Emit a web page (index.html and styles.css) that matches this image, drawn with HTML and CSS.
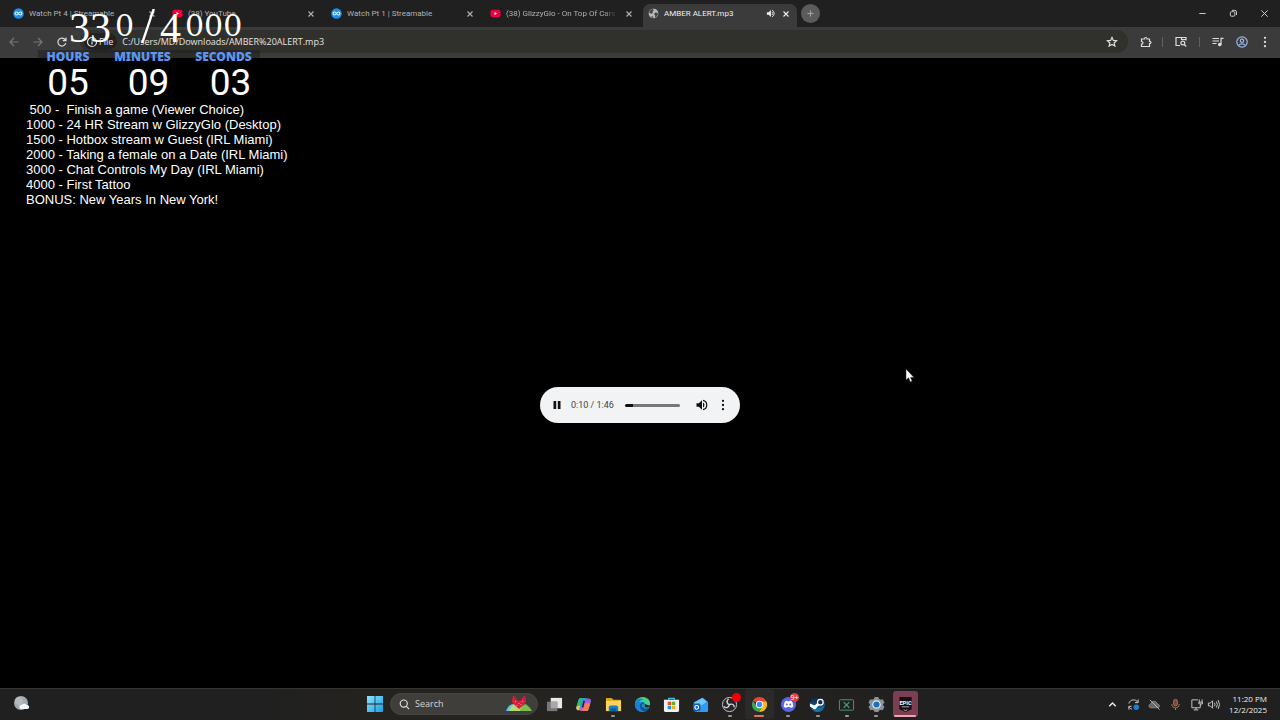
FILE: index.html
```html
<!DOCTYPE html>
<html lang="en">
<head>
<meta charset="utf-8">
<title>AMBER ALERT.mp3</title>
<link rel="stylesheet" href="styles.css">
</head>
<body>
<svg class="defs" aria-hidden="true">
  <symbol id="close" viewBox="0 0 8 8"><path d="M1.5 1.5l5 5M6.500 1.500l-5 5" stroke="currentColor" stroke-width="1.100" fill="none"/></symbol>
  <symbol id="streamable" viewBox="0 0 12 12"><circle cx="6" cy="6" r="5.700" fill="#1f8fe8"/><path d="M6 6C5.200 4.700 4.600 4.300 3.900 4.300a1.700 1.700 0 0 0 0 3.400C5.600 7.700 6.200 4.300 8 4.300a1.700 1.700 0 0 1 0 3.400C7.300 7.700 6.700 7.200 6 6z" fill="none" stroke="#e9f5ff" stroke-width="1.100"/></symbol>
  <symbol id="youtube" viewBox="0 0 12 12"><rect x=".5" y="2" width="11" height="8" rx="2" fill="#f0003c"/><path d="M4.900 4.300v3.400L7.900 6z" fill="#fff"/></symbol>
  <symbol id="dots" viewBox="0 0 12 12"><circle cx="6" cy="1.800" r="1.150"/><circle cx="6" cy="6" r="1.150"/><circle cx="6" cy="10.200" r="1.150"/></symbol>
</svg>

<header class="browser">
  <div class="tabstrip">
    <div class="tab"><svg class="fav"><use href="#streamable"/></svg><span class="title">Watch Pt 4 | Streamable</span><button class="close" aria-label="Close tab"><svg><use href="#close"/></svg></button></div>
    <div class="tab"><svg class="fav"><use href="#youtube"/></svg><span class="title">(38) YouTube</span><button class="close" aria-label="Close tab"><svg><use href="#close"/></svg></button></div>
    <div class="tab"><svg class="fav"><use href="#streamable"/></svg><span class="title">Watch Pt 1 | Streamable</span><button class="close" aria-label="Close tab"><svg><use href="#close"/></svg></button></div>
    <div class="tab"><svg class="fav"><use href="#youtube"/></svg><span class="title faded">(38) GlizzyGlo - On Top Of Cars</span><button class="close" aria-label="Close tab"><svg><use href="#close"/></svg></button></div>
    <div class="tab active"><svg class="fav" viewBox="0 0 12 12"><circle cx="6" cy="6" r="5.300" fill="#b9b9b9"/><path d="M5.200 1.200C2.600 1.700 1.500 3.500 1.300 5.300l2.500 1 1.600-.9L4.600 4l1.700-1zM10.800 5.500L8 5 6.500 6.500l1.300 1.300L7.500 10.500C9.500 10 10.900 8 10.800 5.500zM3 9.500l2.500-.5.300 1.800C4.500 10.800 3.600 10.200 3 9.500z" fill="#444"/></svg><span class="title">AMBER ALERT.mp3</span><button class="mute" aria-label="Mute tab"><svg viewBox="0 0 10 10"><path d="M1 3.500h2L5.500 1v8L3 6.500H1z" fill="currentColor"/><path d="M6.600 3.300a2.200 2.200 0 0 1 0 3.400M6.600 1.300a4 4 0 0 1 0 7.400" fill="none" stroke="currentColor"/></svg></button><button class="close" aria-label="Close tab"><svg><use href="#close"/></svg></button></div>
    <button class="newtab" aria-label="New tab"><svg viewBox="0 0 10 10"><path d="M5 1.500v7M1.500 5h7" stroke="currentColor" stroke-width="1"/></svg></button>
    <div class="windowbuttons">
      <button aria-label="Minimize"><svg viewBox="0 0 10 10"><path d="M1.500 5h7" stroke="currentColor"/></svg></button>
      <button aria-label="Restore"><svg viewBox="0 0 10 10" fill="none" stroke="currentColor"><rect x="1.500" y="3" width="5" height="5" rx="1.200"/><path d="M3.200 1.500h3.300Q8.300 1.500 8.300 3.300v3.400"/></svg></button>
      <button aria-label="Close"><svg viewBox="0 0 10 10"><path d="M1.500 1.500l7 7M8.500 1.500l-7 7" stroke="currentColor"/></svg></button>
    </div>
  </div>
  <div class="toolbar">
    <nav class="history">
      <button class="dim" aria-label="Back"><svg viewBox="0 0 12 12"><path d="M10.500 6h-8.500M6 2L2 6l4 4"/></svg></button>
      <button class="dim" aria-label="Forward"><svg viewBox="0 0 12 12"><path d="M1.500 6H10M6 2l4 4-4 4"/></svg></button>
      <button aria-label="Reload"><svg viewBox="0 0 12 12"><path d="M9.800 7.200A4 4 0 1 1 9.200 3.700L10 4.600M10 1.500v3.200H6.800"/></svg></button>
    </nav>
    <div class="omnibox">
      <button class="chip"><svg viewBox="0 0 12 12"><circle cx="6" cy="6" r="4.500"/><path d="M6 5.400v3M6 3.300v1.100"/></svg>File</button>
      <input class="url" type="text" aria-label="Address" value="C:/Users/MD/Downloads/AMBER%20ALERT.mp3">
      <button aria-label="Bookmark"><svg viewBox="0 0 12 12"><path d="M6 1.500l1.350 2.950 3.200.35-2.400 2.150.7 3.150L6 8.500l-2.850 1.600.7-3.150-2.400-2.150 3.200-.35z"/></svg></button>
    </div>
    <div class="actions">
      <button class="extensions" aria-label="Extensions"><svg viewBox="0 0 12 12"><path d="M1.500 3h3c0-2 2.500-2 2.500 0h2.500v2.300c2 0 2 2.400 0 2.400v2.800h-8V8c2 0 2-2.500 0-2.500z"/></svg></button>
      <i></i>
      <button aria-label="Search side panel"><svg viewBox="0 0 12 12"><path d="M5 9.500H1v-8h10v3M6.500 1.500v2H11"/><circle cx="7.800" cy="7" r="1.900"/><path d="M9.200 8.500l2 2"/></svg></button>
      <i></i>
      <button aria-label="Media controls"><svg viewBox="0 0 12 12"><path d="M.5 2.500h6.500M.5 5h6.500M.5 7.500h4M9 8.500V2.300h2.500"/><circle cx="7.800" cy="8.500" r="1.200" fill="currentColor"/></svg></button>
      <button class="profile" aria-label="Profile"><svg viewBox="0 0 12 12"><circle cx="6" cy="6" r="5.200"/><circle cx="6" cy="4.800" r="1.700"/><path d="M2.500 9.500c1.500-2.300 5.500-2.300 7 0"/></svg></button>
      <button class="menu" aria-label="Menu"><svg><use href="#dots"/></svg></button>
    </div>
  </div>
</header>

<main class="viewer">
  <div class="player">
    <button aria-label="Pause"><svg viewBox="0 0 12 12"><path d="M2.500 2h2.700v8H2.500zM6.800 2h2.700v8H6.800z"/></svg></button>
    <span class="time">0:10 / 1:46</span>
    <input class="seek" type="range" aria-label="Seek" min="0" max="106" value="10">
    <button class="volume" aria-label="Volume"><svg viewBox="0 0 12 12"><path d="M.5 4.200h2.300L6 1.200v9.600L2.800 7.800H.5z"/><path d="M7 3.600a2.700 2.700 0 0 1 0 4.800z"/><path d="M7 1.400a4.700 4.700 0 0 1 0 9.200" fill="none" stroke="#111" stroke-width="1.200"/></svg></button>
    <button class="more" aria-label="More options"><svg><use href="#dots"/></svg></button>
  </div>
</main>

<footer class="taskbar">
  <button class="weather" aria-label="Weather"><svg viewBox="0 0 18 18"><circle cx="8" cy="8" r="7" fill="#a5a9ac"/><circle cx="6" cy="6" r="4" fill="#b6babd"/><path d="M8 14a2 2 0 0 1 .5-4 3 3 0 0 1 5.300 0 2 2 0 0 1 .7 4z" fill="#f4f7fa"/></svg></button>
  <div class="dock">
    <button class="start" aria-label="Start"><svg viewBox="0 0 16 16"><defs><linearGradient id="win" x2="1" y2="1"><stop stop-color="#8de3fa"/><stop offset="1" stop-color="#15a2e9"/></linearGradient></defs><path d="M0 0h7.600v7.600H0zM8.400 0H16v7.600H8.400zM0 8.400h7.600V16H0zM8.400 8.400H16V16H8.400z" fill="url(#win)"/></svg></button>
    <label class="search"><svg class="glass" viewBox="0 0 12 12"><circle cx="5.200" cy="5" r="3.900"/><path d="M8 8l3 3"/></svg><input type="text" placeholder="Search" aria-label="Search"><svg class="art" viewBox="0 0 26 16"><path d="M0 15C2 10 5 7 9 9l3 6z" fill="#55c7ef"/><path d="M3 15C6 8 9 6 13 7l8 8z" fill="#b4d973"/><path d="M14 15c1-5 5-9 8-5 2 2 3 3 4 5z" fill="#7bbf4b"/><path d="M13 13L6.500 7C5 4 7 2 9.500 3L13 5l3.500-2c2.500-1 4.500 1 3 4z" fill="#d71f3c"/><path d="M7 0l3 3.500M9 1L6 3M19 0l-3 3.500M17 1l3 2" stroke="#d71f3c" stroke-width="1.300"/><path d="M9 5l1 1M12.500 7l1 1M16 5l1 1M10.500 9l1 1M14.500 9l1-1" stroke="#ff8591"/></svg></label>
    <div class="apps">
      <button aria-label="Task view"><svg viewBox="0 0 18 18"><path d="M5 2h12v11H5z" fill="#e8e8e8"/><path d="M1 6h11v10H1z" fill="#777"/><path d="M5 6h7v7H5z" fill="#a8a8a8"/></svg></button>
      <button aria-label="Copilot"><svg viewBox="0 0 18 18"><path d="M6 2h5c2 0 2 1.500 2.500 3h-3L8 13.500C7.500 15 6.500 15 5 15H3.500C1 15 1 12.500 2 9.500l1.500-5C4 3 4.500 2 6 2z" fill="#239edc"/><path d="M2 10l2-6c.5-1.500 1-2 2.500-2H8L5 12z" fill="#38b676"/><path d="M1.500 11l4-1-1 5H3.500c-2 0-2.300-2-2-4z" fill="#f2c845"/><path d="M12 16H7c-2 0-2-1.500-2.500-3h3L10 4.500C10.500 3 11.500 3 13 3h1.500C17 3 17 5.500 16 8.500l-1.500 5C14 15 13.500 16 12 16z" fill="#d75cc1"/><path d="M8 16l3-8h5.200l-1.700 5.500c-.5 1.500-1 2.500-2.500 2.500z" fill="#f47c55"/><path d="M11 3h3.500C17 3 17 5 16.500 7H10z" fill="#8e62e8"/><path d="M9.800 5L8 12" stroke="#262421" stroke-width="1.600"/></svg></button>
      <button class="running" aria-label="File Explorer"><svg viewBox="0 0 18 18"><path d="M1 2h6l2 2h7a1 1 0 0 1 1 1v3H1z" fill="#dca319"/><path d="M1 5h16v11H1z" fill="#fbd25c"/><path d="M4 16v-4.500L5.500 10h7l1.500 1.500V16z" fill="#1681ce"/><path d="M6 13h6v3H6z" fill="#075f9f"/></svg></button>
      <button aria-label="Edge"><svg viewBox="0 0 18 18"><circle cx="9" cy="9" r="8" fill="#178bd2"/><path d="M1 8C2-1 17-1 17 8c0 4-6 4-6 2 1-1 .5-4-3-4-3 0-6 1-7 2z" fill="#46cf91"/><path d="M1 8c1-5 6-6 9-4C6 4 5 7 5 10c0 4 4 6 7 6C6 19 0 14 1 8z" fill="#1a7fd6"/><path d="M11 8c-3 0-4 2-2 4 2 2 5 2 7 0-1 3-4 5-6 4-5-2-5-8-1-9 1 0 2 0 2 1z" fill="#15508f"/><path d="M11 10.500c1-1 .5-2 0-2.500 1.500.5 4 3 6.500 1.500-1 3-6.500 3-6.500 1z" fill="#242424"/></svg></button>
      <button aria-label="Microsoft Store"><svg viewBox="0 0 18 18"><path d="M6 4V2.500h6V4" fill="none" stroke="#40b9ed" stroke-width="1.400"/><path d="M1 4h16v11q0 2-2 2H3q-2 0-2-2z" fill="#eef2f5"/><path d="M5 6h3.600v3.600H5z" fill="#e5502b"/><path d="M9.400 6H13v3.600H9.400z" fill="#68ac27"/><path d="M5 10.400h3.600V14H5z" fill="#1b92dc"/><path d="M9.400 10.400H13V14H9.400z" fill="#eeb01c"/></svg></button>
      <button aria-label="Outlook"><svg viewBox="0 0 18 18"><path d="M2 7l8-5q1-.5 2 0l5 4v9q0 2-2 2H5q-3 0-3-3z" fill="#1972d3"/><path d="M2 7l9-5 5 4-8 6-6-1z" fill="#72c8fa"/><path d="M8 11l9-5v9q0 2-2 2H5z" fill="#2f9cf1"/><rect x="1" y="8" width="8" height="8" rx="1.500" fill="#155eb7"/><circle cx="5" cy="12" r="2" fill="none" stroke="#fff" stroke-width="1.200"/></svg></button>
      <button class="running" aria-label="OBS Studio"><svg viewBox="0 0 18 18"><circle cx="9" cy="9" r="7.500" fill="#28262a" stroke="#c9c9c9"/><path d="M8 3c-3 3-1 6 1 6 3-1 5 0 5 3M9 9c-1 4-4 4-6 2" fill="none" stroke="#d4d4d4" stroke-width="1.500"/></svg><span class="badge live"></span></button>
      <button class="running current" aria-label="Chrome"><svg viewBox="0 0 18 18"><path d="M9 9L2.100 5A8 8 0 0 1 16.200 5.500H9z" fill="#ea4335"/><path d="M9 9l0-3.500h7.200A8 8 0 0 1 8.500 17L12 11z" fill="#fbbc05"/><path d="M9 9l3 2-3.500 6A8 8 0 0 1 2.100 5L6 11z" fill="#34a853"/><circle cx="9" cy="9" r="3.900" fill="#fff"/><circle cx="9" cy="9" r="2.900" fill="#4285f4"/></svg></button>
      <button class="running" aria-label="Discord"><svg viewBox="0 0 18 18"><circle cx="9" cy="9" r="8" fill="#5965e8"/><path d="M5.500 5.500l2-.7.500.8h2l.5-.8 2 .7c1 1.500 1.700 4 1.500 6l-2.500 1.300-.7-1.200H7.200l-.7 1.200L4 11.500c-.2-2 .5-4.500 1.500-6z" fill="#fff"/><circle cx="7.200" cy="9" r="1" fill="#5965e8"/><circle cx="10.800" cy="9" r="1" fill="#5965e8"/></svg><span class="badge">9+</span></button>
      <button class="running" aria-label="Steam"><svg viewBox="0 0 18 18"><defs><linearGradient id="steam" x2="0" y2="1"><stop stop-color="#10203b"/><stop offset="1" stop-color="#157dbb"/></linearGradient></defs><circle cx="9" cy="9" r="8" fill="url(#steam)"/><path d="M1 8l5 2 3.500-3.500L12 9 8 12l-2 2-5-3z" fill="#fff"/><circle cx="12" cy="6.500" r="3" fill="#1b2d48" stroke="#fff" stroke-width="1.300"/><circle cx="6" cy="12" r="2" fill="#fff"/></svg></button>
      <button class="running" aria-label="Capture"><svg viewBox="0 0 18 18" fill="none" stroke="#439b83"><rect x="1.500" y="4" width="15" height="11" rx="1"/><path d="M6 6.500l6 6M12 6.500l-6 6" stroke-width="1.300"/></svg></button>
      <button class="running" aria-label="Settings"><svg viewBox="0 0 18 18"><path d="M7 1h4l.5 2 2 1 2-.5 2 3.500-1.500 1.500v1.500l1.500 1.500-2 3.500-2-.5-2 1L11 17H7l-.5-1.500-2-1-2 .5-2-3.500L2 10V8.500L.5 7l2-3.500 2 .5 2-1z" fill="#8c9299"/><circle cx="9" cy="9" r="4.500" fill="#e9edf0"/><circle cx="9" cy="9" r="3.300" fill="#1971bb"/></svg></button>
      <button class="running epic" aria-label="Epic Games"><svg viewBox="0 0 18 18"><path d="M2.500 1h13v13L9 17l-6.500-3z" fill="#111"/><text x="9" y="9" class="epictext">EPIC</text><path d="M5 11.500h8M7 14.500l2 1 2-1" stroke="#ddd" stroke-width=".8" fill="none"/></svg></button>
    </div>
  </div>
  <div class="tray">
    <button aria-label="Hidden icons"><svg viewBox="0 0 14 14"><path d="M3.500 9L7 5.500 10.500 9" stroke="#eee" stroke-width="1.500"/></svg></button>
    <button aria-label="Updates"><svg viewBox="0 0 14 14"><path d="M2 6c1-5 8-5 9.500-1.500M12 1.500v3.500H8.500M5.500 12C4 12 3 11 2.300 9.500M2 12.500V9h3"/><circle cx="10" cy="10" r="3" fill="#1d7fd2" stroke="none"/></svg></button>
    <button aria-label="Cloud sync off"><svg viewBox="0 0 14 14"><path d="M3 10.500c-2.500 0-2.500-4 0-4 1-4 6-4 7 0 3 0 3 4 .5 4z" fill="#686868" stroke="#888"/><path d="M2 2l10.500 10.500" stroke="#bbb"/></svg></button>
    <button class="mic" aria-label="Microphone"><svg viewBox="0 0 14 14"><rect x="5" y="1.500" width="4" height="7" rx="2" fill="#754735"/><path d="M3 6.500c0 5.500 8 5.500 8 0M7 10.800V13"/></svg></button>
    <button aria-label="Network"><svg viewBox="0 0 14 14"><path d="M8.500 2H2v8.500h9V8M4 12.800h5M6.500 10.500v2M10 1.500v3M13 1.500v3M9.500 4.500h4v1.800h-4zM11.500 6.500v2"/></svg></button>
    <button class="sound" aria-label="Sound"><svg viewBox="0 0 14 14"><path d="M1.500 5.500h2L6 3v8L3.500 8.500h-2zM8 5.200q1.300 1.800 0 3.600M10 3.700q2.400 3.300 0 6.600M12 2.200q3 4.800 0 9.600"/></svg></button>
    <div class="clock"><time>11:20 PM</time><time>12/2/2025</time></div>
  </div>
</footer>

<section class="overlay" aria-label="Stream goals">
  <div class="goal"><span class="low">33</span><span class="mid">0</span><span class="slash">/</span><span class="low">4</span><span class="mid">000</span></div>
  <div class="labels"><b>HOURS</b><b>MINUTES</b><b>SECONDS</b></div>
  <div class="digits"><span>05</span><span>09</span><span>03</span></div>
  <ul class="goals">
    <li> 500 -  Finish a game (Viewer Choice)</li>
    <li>1000 - 24 HR Stream w GlizzyGlo (Desktop)</li>
    <li>1500 - Hotbox stream w Guest (IRL Miami)</li>
    <li>2000 - Taking a female on a Date (IRL Miami)</li>
    <li>3000 - Chat Controls My Day (IRL Miami)</li>
    <li>4000 - First Tattoo</li>
    <li>BONUS: New Years In New York!</li>
  </ul>
</section>
<svg class="cursor" viewBox="0 0 10 15" aria-hidden="true"><path d="M1 1v11l2.600-2.300L5.200 14l2-.9-1.700-3.700H9z" fill="#fff" stroke="#222" stroke-width=".5"/></svg>
</body>
</html>
```

FILE: styles.css
```css
* { box-sizing: border-box; }
body {
  margin: 0;
  min-height: 100vh;
  display: flex;
  flex-direction: column;
  position: relative;
  background: #000;
  color: #ddd;
  font: 9px/12px "Open Sans", "Noto Sans", sans-serif;
}
button, input { font: inherit; color: inherit; background: none; border: 0; padding: 0; margin: 0; outline: 0; }
button { display: flex; align-items: center; justify-content: center; flex: none; }
svg { display: block; flex: none; }
.defs { position: absolute; width: 0; height: 0; }

/* Tab strip */
.tabstrip { display: flex; align-items: flex-end; height: 27px; padding-left: 4px; background: #202020; }
.tab {
  flex: 0 1 159px;
  min-width: 0;
  height: 23px;
  display: flex;
  align-items: center;
  padding: 0 7px 4px 9px;
  color: #b2b2b2;
}
.fav { width: 11px; height: 11px; margin-right: 5px; }
.title { flex: 1; min-width: 0; overflow: hidden; white-space: nowrap; font: 8px/12px Roboto, "Open Sans", sans-serif; }
.title.faded { margin-right: 8px; -webkit-mask-image: linear-gradient(90deg, #000 88%, transparent); mask-image: linear-gradient(90deg, #000 88%, transparent); }
.close svg { width: 8px; height: 8px; }
.tab.active {
  flex-basis: 154px;
  margin: 0 4px 0 3px;
  padding-left: 5px;
  background: #3b3b3b;
  border-radius: 7px 7px 0 0;
  color: #eee;
}
.mute { margin-right: 7px; }
.mute svg { width: 9px; height: 9px; }
.newtab { width: 19px; height: 19px; margin-bottom: 4px; border-radius: 50%; background: #5b5b5b; color: #aaa; }
.newtab svg { width: 9px; height: 9px; }
.windowbuttons { margin-left: auto; display: flex; height: 27px; }
.windowbuttons button { width: 31px; }
.windowbuttons svg { width: 9px; height: 9px; }

/* Toolbar */
.toolbar { display: flex; align-items: center; height: 31px; padding: 0 9px 2px 8px; background: #3b3b3b; }
.toolbar svg { width: 12px; height: 12px; fill: none; stroke: currentColor; stroke-width: 1.2; }
.history { display: flex; gap: 12px; margin-right: 12px; }
.history .dim { color: #777; }
.omnibox { flex: 1; display: flex; align-items: center; height: 23px; padding: 0 10px 0 4px; border-radius: 12px; background: #30302d; }
.chip { gap: 1px; height: 17px; padding: 0 4px 0 2px; border-radius: 9px; background: #222; color: #e5e5e5; }
.url { flex: 1; min-width: 0; margin-left: 5px; color: #e5e5e5; }
.actions { display: flex; align-items: center; gap: 12px; margin-left: 12px; }
.actions i { width: 1px; height: 10px; background: #606060; }
.actions .extensions { margin-right: -2px; }
.actions .profile { color: #9cb6e8; }
.actions .menu { margin-left: -1px; }
.actions .menu svg { fill: currentColor; stroke: none; }

/* Audio page */
.viewer { flex: 1; display: flex; align-items: center; justify-content: center; padding-top: 64px; }
.player { display: flex; align-items: center; width: 200px; height: 36px; padding: 0 11px; border-radius: 18px; background: #f1f3f4; color: #111; }
.player svg { width: 12px; height: 12px; fill: #111; }
.time { margin: 0 11px 0 8px; font: 9px/12px Roboto, sans-serif; color: #444; white-space: nowrap; }
.seek { -webkit-appearance: none; appearance: none; flex: 1; min-width: 0; height: 3px; border-radius: 2px; background: linear-gradient(90deg, #111 15%, #777 15%); }
.seek::-webkit-slider-thumb { -webkit-appearance: none; width: 1px; height: 1px; }
.volume { margin: 0 9px 0 16px; }

/* Taskbar */
.taskbar { display: grid; grid-template-columns: 1fr auto 1fr; align-items: center; height: 32px; padding-bottom: 1px; border-top: 1px solid #353535; background: linear-gradient(90deg, #202020 20%, #25231f 30%, #25231f 45%, #202020 75%); }
.weather { justify-self: start; margin-left: 13px; }
.weather svg { width: 18px; height: 18px; }
.dock { display: flex; align-items: center; }
.start { width: 30px; height: 30px; }
.start svg { width: 16px; height: 16px; }
.search { display: flex; align-items: center; width: 148px; height: 22px; padding: 0 5px 0 8px; border-radius: 11px; background: #403e3a; border: 1px solid #484642; }
.search input { flex: 1; min-width: 0; margin-left: 5px; font: 9px/16px "Open Sans", sans-serif; }
.search input::placeholder { color: #d5d3d0; opacity: 1; }
.glass { width: 11px; height: 11px; fill: none; stroke: #ddd; stroke-width: 1.3; }
.art { width: 26px; height: 16px; }
.apps { display: grid; grid-template-columns: repeat(13, 1fr); width: 380px; margin-left: 2px; }
.apps button { position: relative; height: 30px; }
.apps svg { width: 17px; height: 17px; }
.running::after { content: ""; position: absolute; bottom: 2px; left: calc(50% - 2px); width: 4px; height: 2px; border-radius: 1px; background: #989898; }
.current { background: #2b2a29; border-radius: 3px; }
.current::after { left: calc(50% - 5px); width: 10px; background: #df765f; }
.epic::before { content: ""; position: absolute; inset: 2px; border-radius: 3px; background: #7d3d52; }
.epic svg { position: relative; }
.epic::after { left: calc(50% - 11px); width: 22px; background: #f1a3b5; }
.epictext { font: 700 6px Roboto, sans-serif; fill: #fff; text-anchor: middle; }
.badge { position: absolute; top: 4px; right: 4px; width: 9px; height: 9px; border-radius: 50%; background: #d83b4c; color: #fff; font-size: 7px; line-height: 9px; }
.badge.live { background: #f00008; }
.tray { justify-self: end; display: flex; align-items: center; padding-right: 13px; }
.tray button { width: 21px; }
.tray svg { width: 13px; height: 13px; fill: none; stroke: #d0d0d0; }
.tray .mic svg { stroke: #b97759; }
.tray .sound { width: 13px; }
.clock { display: flex; flex-direction: column; width: 47px; text-align: right; font-size: 8px; line-height: 11px; color: #eee; }

/* Stream overlay */
.overlay { position: absolute; top: 0; left: 26px; color: #fff; }
.goal { height: 50px; padding-top: 2px; margin-left: 42px; font: 42px/36px "Liberation Serif", serif; white-space: nowrap; }
.goal .low { margin: 0 1px; vertical-align: -8px; }
.goal .mid { margin: 0 3px; font-family: "DejaVu Serif", serif; font-size: 30px; vertical-align: -2px; }
.goal .slash { margin: 0 4px; font-size: 50px; vertical-align: -8px; }
.labels, .digits { display: grid; width: fit-content; margin-left: 12px; justify-items: center; }
.labels { grid-template-columns: 60px 89px 73px; background: linear-gradient(rgba(28, 28, 28, .5) 8px, transparent 8px); color: #5c96f2; font: 700 12px/13px "Noto Sans", sans-serif; }
.digits { grid-template-columns: 60px 101px 63px; font: 37px/39px Roboto, sans-serif; }
.goals { margin: 0; padding: 0; list-style: none; font: 13px/15px "Liberation Sans", Arial, sans-serif; }
.goals li { white-space: pre; }
.cursor { position: absolute; top: 368px; left: 905px; width: 10px; height: 15px; }
```
